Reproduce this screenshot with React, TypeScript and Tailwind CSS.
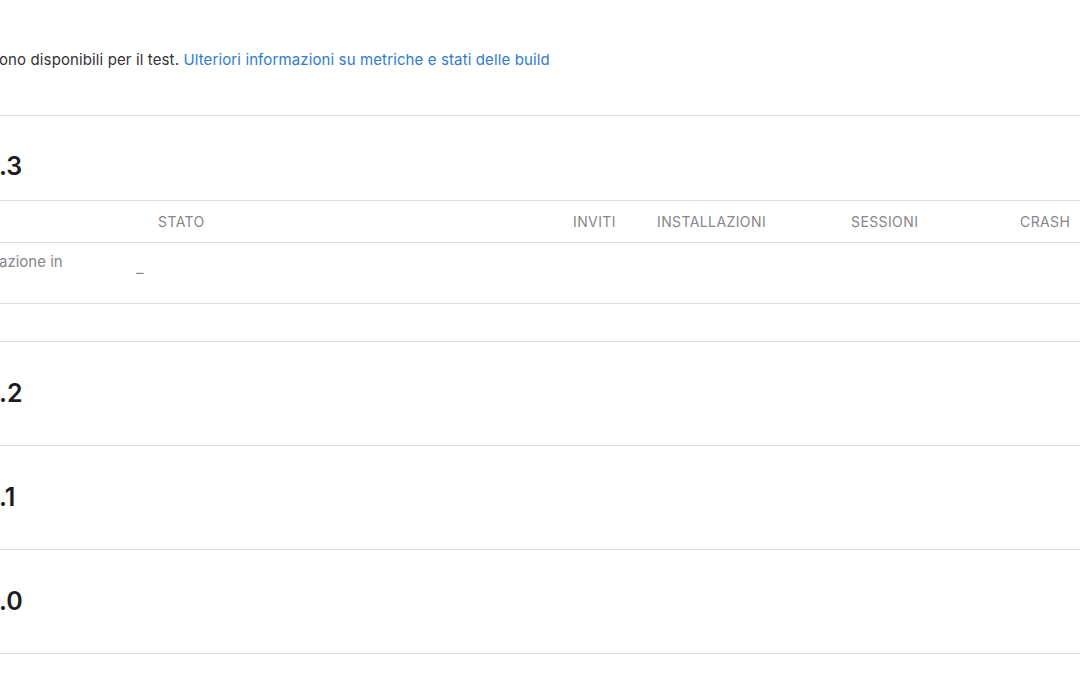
export default function App() {
  const font = { fontFamily: 'Inter, "Noto Sans", sans-serif' };
  const Section = ({ label }: { label: string }) => (
    <div className="h-[104px] flex items-center border-b border-[#dcdcdc]">
      <div className="text-[25px] font-semibold text-[#1d1d1f] leading-none -ml-[1px]">{label}</div>
    </div>
  );
  return (
    <div className="w-[1080px] h-[675px] bg-white overflow-hidden" style={font}>
      <div className="pt-[50px] h-[116px] border-b border-[#dcdcdc]">
        <p className="text-[15px] tracking-[0.12px] leading-[20px] text-[#333336] whitespace-nowrap -ml-[1px]">
          ono disponibili per il test.{' '}
          <span className="text-[#2f7bd0]">Ulteriori informazioni su metriche e stati delle build</span>
        </p>
      </div>
      <div className="h-[85px] flex items-end pb-[21px] border-b border-[#dcdcdc]">
        <div className="text-[25px] font-semibold text-[#1d1d1f] leading-none -ml-[1px]">.3</div>
      </div>
      <div className="h-[42px] grid grid-cols-[158px_415px_84px_194px_169px_1fr] items-center text-[14px] text-[#86868b] tracking-[0.4px] border-b border-[#dcdcdc] whitespace-nowrap">
        <span />
        <span>STATO</span>
        <span>INVITI</span>
        <span>INSTALLAZIONI</span>
        <span>SESSIONI</span>
        <span>CRASH</span>
      </div>
      <div className="h-[61px] border-b border-[#dcdcdc] grid grid-cols-[136px_1fr] text-[15px] text-[#86868b]">
        <div className="pt-[9px] leading-[20px] -ml-[1px]">azione in</div>
        <div className="pt-[20px] leading-[20px]">–</div>
      </div>
      <div className="h-[38px] border-b border-[#dcdcdc]" />
      <Section label=".2" />
      <Section label=".1" />
      <Section label=".0" />
    </div>
  );
}
